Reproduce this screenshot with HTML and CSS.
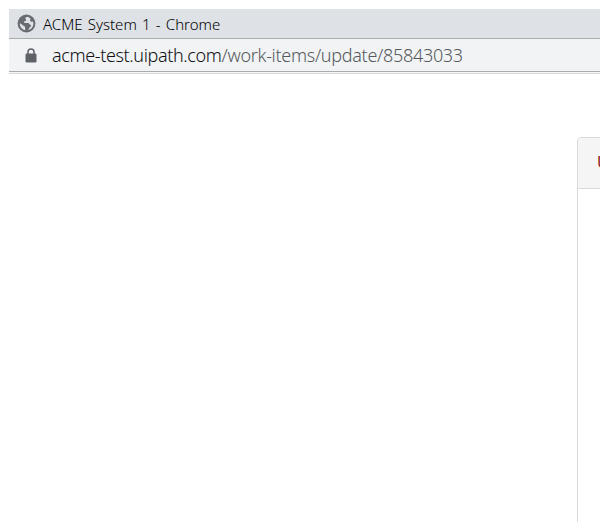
FILE: index.html
```html
<!DOCTYPE html>
<html lang="en">
<head>
<meta charset="utf-8">
<title>ACME System 1</title>
<link rel="stylesheet" href="styles.css">
</head>
<body>
<div class="window">
  <header class="titlebar">
    <svg class="globe" viewBox="0 0 20 20"><circle cx="10" cy="10" r="9.400" fill="#686b6f"/><path d="M11 3C8.500 3.500 8 5 9.500 5.700C10 7 8.500 7.500 7.500 8C7 9 7.500 9.600 8.500 9.500L11.500 9.500C13 9.700 13 11.300 14.500 11.500C15.300 12.300 14.300 13.500 13.300 14C13 15.500 12 16.500 11 17C15 16.500 17.300 13.500 17.300 10L16.800 7.500C15.500 8.700 13.800 8 13.800 6.700C14.800 5.500 14 3.700 11 3ZM2.800 10C3 13.500 5 16.300 8.300 17C9 16 8.500 15 8.500 14C8.500 12.500 7 12.500 6 11.800C5 10.500 4 10 2.800 10Z" fill="#dee1e6"/></svg>
    <span class="title">ACME System 1 - Chrome</span>
  </header>
  <div class="addressbar">
    <svg class="lock" viewBox="0 0 12 15"><path d="M3 6V4a3 3 0 0 1 6 0v2" fill="none" stroke="#5f6368" stroke-width="1.500"/><rect x=".5" y="5.500" width="11" height="9" rx="1.200" fill="#5f6368"/></svg>
    <span class="url"><span class="host">acme-test.uipath.com</span><span class="path">/work-items/update/85843033</span></span>
  </div>
  <div class="divider"></div>
  <main class="page">
    <section class="card"><div class="card-header">U</div></section>
  </main>
</div>
</body>
</html>
```
FILE: styles.css
```css
* { box-sizing: border-box; }
body { margin: 0; background: #fff; overflow: hidden; font-family: "Noto Sans", sans-serif; }
.window { height: 522px; padding: 9px 0 0 9px; display: flex; flex-direction: column; }
.titlebar { height: 30px; flex: none; display: flex; align-items: center; padding: 0 0 1px 8px; background: #dee1e6; border-bottom: 1px solid #a9abac; }
.globe { width: 19px; height: 19px; margin: 0 7px 0 0; }
.title { padding-top: 2px; font-size: 15px; font-weight: 300; line-height: 20px; word-spacing: 1.3px; color: #000; white-space: nowrap; }
.addressbar { height: 33px; flex: none; display: flex; align-items: center; padding-left: 16px; background: #f1f3f4; border-bottom: 1px solid #a9acab; }
.lock { width: 12px; height: 15px; margin: 1px 15px 0 0; }
.url { font-size: 18px; font-weight: 300; line-height: 24px; white-space: nowrap; }
.host { color: #101114; letter-spacing: -0.37px; }
.path { color: #56595d; letter-spacing: -0.3px; }
.divider { height: 2px; flex: none; background: #f5f6f6; border-bottom: 1px solid #d8dbda; }
.page { flex: 1; padding: 63px 0 0 568px; overflow: hidden; }
.card { width: 700px; height: 500px; border: 1px solid #d9d9d9; border-radius: 4px; }
.card-header { height: 51px; padding: 13px 19px; background: #f5f5f5; border-bottom: 1px solid #d9d9d9; border-radius: 3px 3px 0 0; font-size: 16px; line-height: 23px; color: #8b2020; }
```
